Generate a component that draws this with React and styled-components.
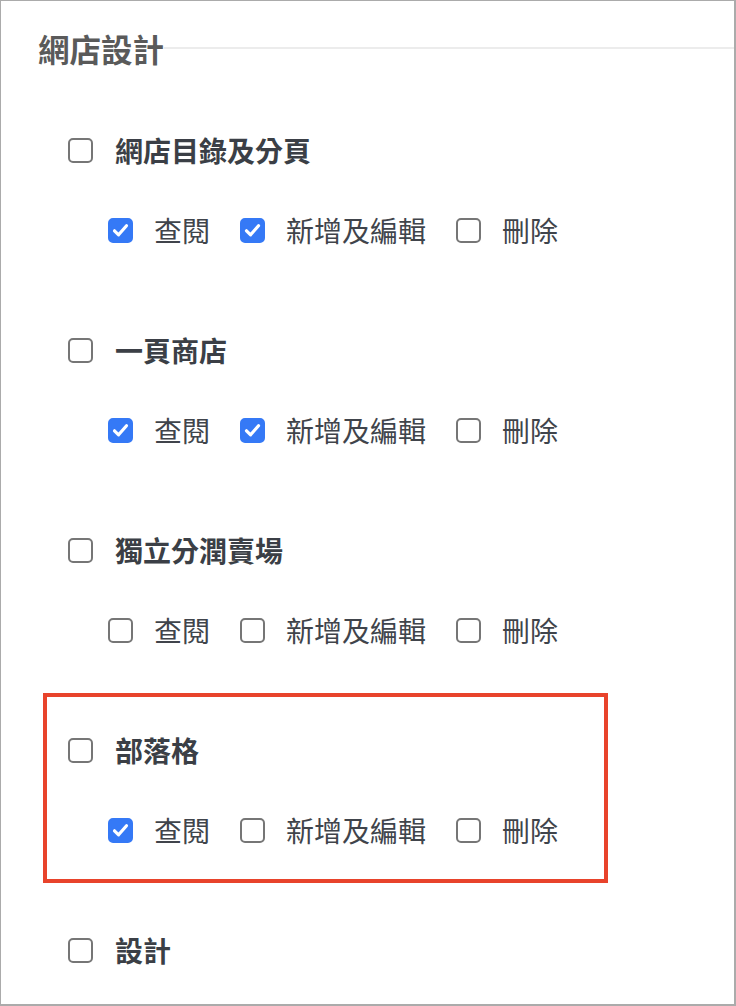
import React from "react";
import styled, { createGlobalStyle } from "styled-components";

const GlobalStyle = createGlobalStyle`
  html, body {
    margin: 0;
    padding: 0;
    background: #fff;
  }
  body {
    font-family: "Noto Sans CJK TC", "Noto Sans", sans-serif;
  }
`;

const Frame = styled.div`
  box-sizing: border-box;
  width: 736px;
  height: 1006px;
  overflow: hidden;
  border-top: 1px solid #ababab;
  border-left: 1px solid #ababab;
  border-right: 2px solid #ababab;
  border-bottom: 2px solid #ababab;
  background: #fff;
`;

const Header = styled.div`
  display: flex;
  align-items: center;
  height: 40px;
  margin-top: 27px;
  padding-left: 37px;
`;

const Title = styled.h2`
  margin: 0;
  font-size: 31.5px;
  line-height: 40px;
  font-weight: 700;
  color: #5a5a5a;
  white-space: nowrap;
`;

const Rule = styled.div`
  flex: 1;
  height: 2px;
  margin-top: -1px;
  background: #ececec;
`;

const List = styled.div`
  display: flex;
  flex-direction: column;
  gap: 10px;
  margin-top: 25px;
  padding-left: 42px;
`;

const Group = styled.div`
  box-sizing: border-box;
  width: 565px;
  height: 190px;
  padding: 33px 0 0 21px;
  border: 4px solid ${(p) => (p.$highlighted ? "#e8432b" : "transparent")};
`;

const ParentRow = styled.label`
  display: flex;
  align-items: center;
  gap: 22px;
  height: 40px;
  font-size: 28px;
  font-weight: 700;
  color: #3b3f46;
`;

const ChildRow = styled.div`
  display: flex;
  align-items: center;
  height: 40px;
  margin-top: 40px;
  padding-left: 40px;
`;

const Option = styled.label`
  display: flex;
  align-items: center;
  gap: 21px;
  margin-right: 30px;
  font-size: 28px;
  font-weight: 400;
  color: #40444b;
`;

const Box = styled.span`
  box-sizing: border-box;
  flex: none;
  display: flex;
  align-items: center;
  justify-content: center;
  width: 25px;
  height: 25px;
  border-radius: 5px;
  border: 2px solid ${(p) => (p.$checked ? "#3579f6" : "#767676")};
  background: ${(p) => (p.$checked ? "#3579f6" : "#fff")};
`;

const Checkbox = ({ checked }) => (
  <Box $checked={checked}>
    {checked && (
      <svg width="19" height="19" viewBox="0 0 19 19">
        <polyline
          points="3.5,9.8 7.6,13.8 15.5,4.8"
          fill="none"
          stroke="#fff"
          strokeWidth="3.2"
          strokeLinecap="round"
          strokeLinejoin="round"
        />
      </svg>
    )}
  </Box>
);

const groups = [
  { name: "網店目錄及分頁", perms: [true, true, false] },
  { name: "一頁商店", perms: [true, true, false] },
  { name: "獨立分潤賣場", perms: [false, false, false] },
  { name: "部落格", perms: [true, false, false], highlighted: true },
  { name: "設計", perms: null },
];

const permLabels = ["查閱", "新增及編輯", "刪除"];

const App = () => (
  <Frame>
    <GlobalStyle />
    <Header>
      <Title>網店設計</Title>
      <Rule />
    </Header>
    <List>
      {groups.map((g) => (
        <Group key={g.name} $highlighted={g.highlighted}>
          <ParentRow>
            <Checkbox checked={false} />
            {g.name}
          </ParentRow>
          {g.perms && (
            <ChildRow>
              {permLabels.map((label, i) => (
                <Option key={label}>
                  <Checkbox checked={g.perms[i]} />
                  {label}
                </Option>
              ))}
            </ChildRow>
          )}
        </Group>
      ))}
    </List>
  </Frame>
);

export default App;
